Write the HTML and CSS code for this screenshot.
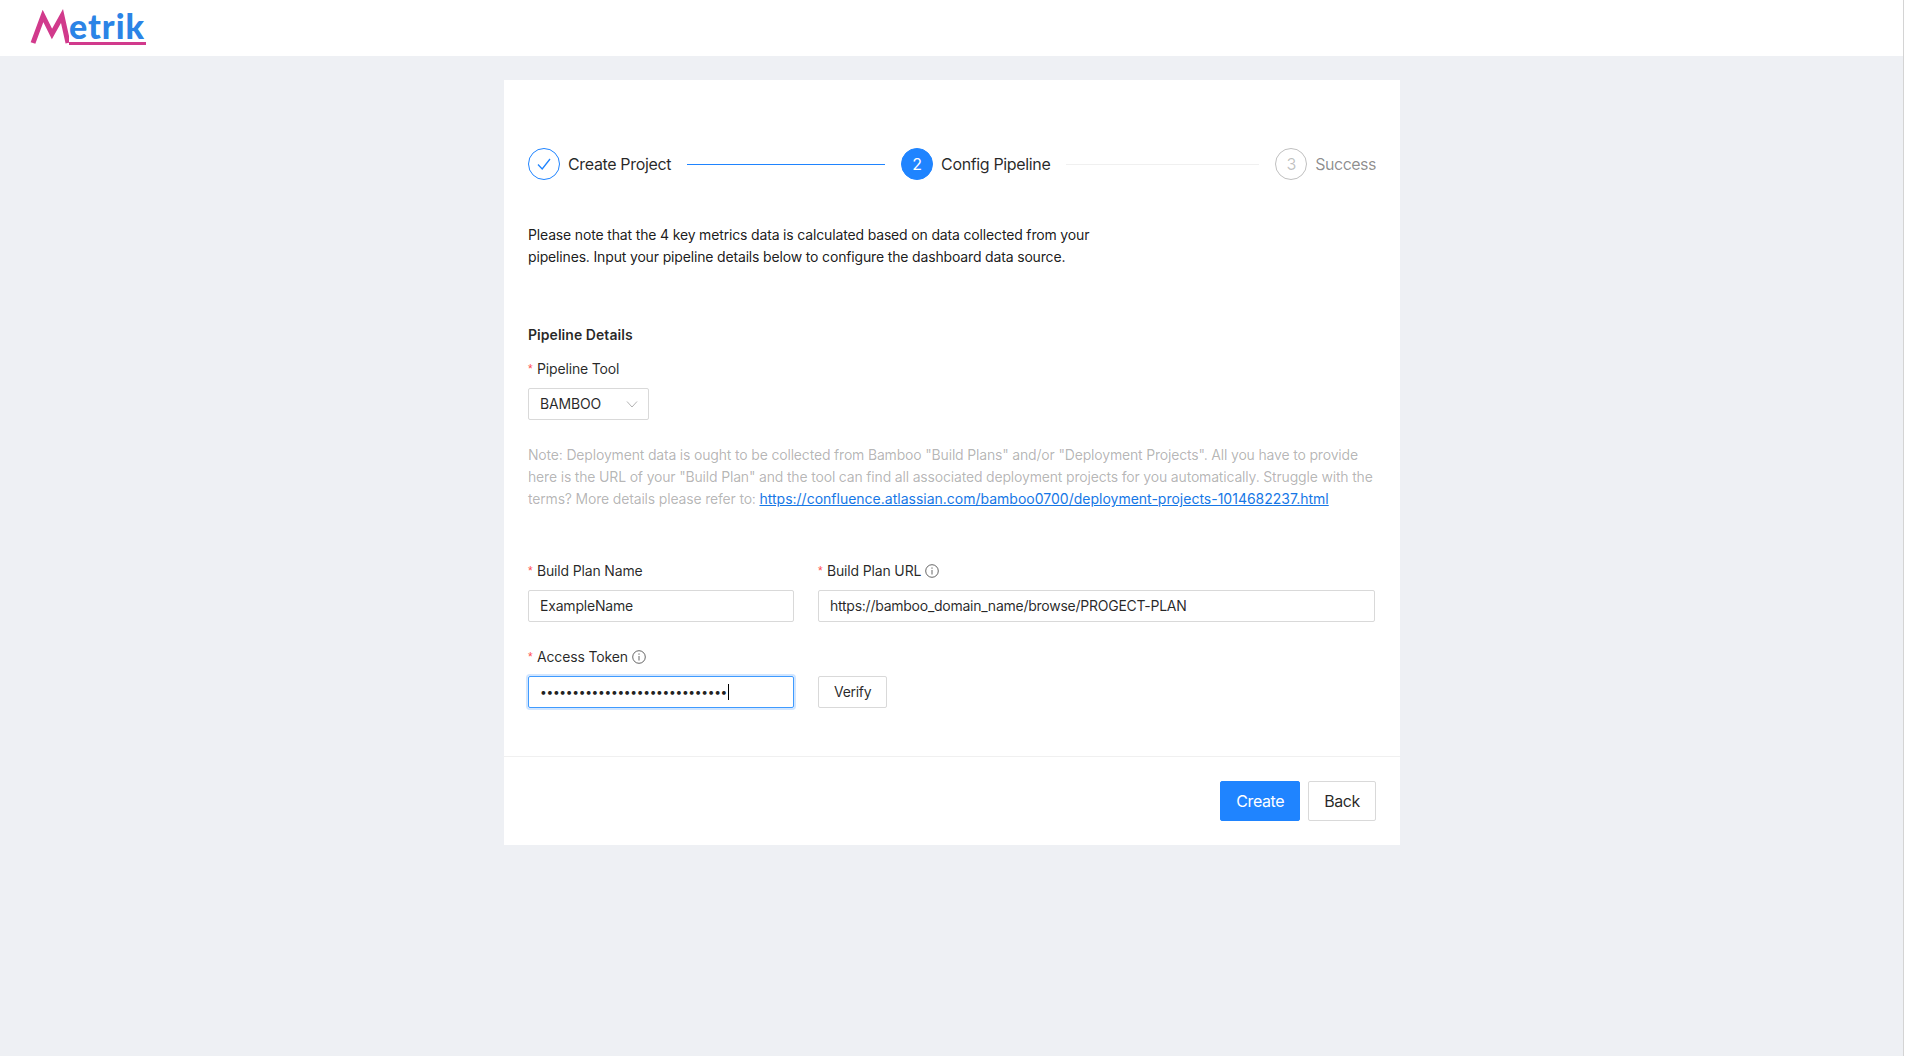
FILE: index.html
```html
<!DOCTYPE html>
<html lang="en">
  <head>
    <meta charset="UTF-8" />
    <meta name="viewport" content="width=device-width, initial-scale=1.0" />
    <title>Metrik</title>
    <link rel="stylesheet" href="styles.css">
  </head>
  <body>
    <header class="header">
      <div class="logo">
        <svg class="logo-mark" width="39" height="38" viewBox="0 0 39 38">
          <path d="M3 35 L13 8 L22 26 L32 8 L38 35" />
        </svg>
        <span class="logo-text">etrik</span>
      </div>
    </header>

    <main class="card">
      <div class="steps">
        <div class="step done">
          <span class="step-icon">
            <svg width="16" height="16" viewBox="0 0 16 16"><path d="M2 8.5 L6.2 13 L14 3" /></svg>
          </span>
          <span class="step-title">Create Project</span>
        </div>
        <div class="step-line active"></div>
        <div class="step current">
          <span class="step-icon">2</span>
          <span class="step-title">Config Pipeline</span>
        </div>
        <div class="step-line"></div>
        <div class="step waiting">
          <span class="step-icon">3</span>
          <span class="step-title">Success</span>
        </div>
      </div>

      <p class="intro">
        Please note that the 4 key metrics data is calculated based on data collected from your
        pipelines. Input your pipeline details below to configure the dashboard data source.
      </p>

      <h3 class="section-title">Pipeline Details</h3>

      <div class="field-label"><span class="required">*</span>Pipeline Tool</div>
      <div class="select">
        <span>BAMBOO</span>
        <svg width="12" height="12" viewBox="0 0 12 12"><path d="M1 3.5 L6 9 L11 3.5" /></svg>
      </div>

      <p class="note">
        Note: Deployment data is ought to be collected from Bamboo "Build Plans" and/or "Deployment Projects". All you have to provide
        here is the URL of your "Build Plan" and the tool can find all associated deployment projects for you automatically. Struggle with the
        terms? More details please refer to:
        <a href="#">https://confluence.atlassian.com/bamboo0700/deployment-projects-1014682237.html</a>
      </p>

      <div class="form-grid">
        <div class="field">
          <div class="field-label"><span class="required">*</span>Build Plan Name</div>
          <input class="input" type="text" value="ExampleName" />
        </div>
        <div class="field">
          <div class="field-label">
            <span class="required">*</span>Build Plan URL
            <svg class="info" width="14" height="14" viewBox="0 0 14 14">
              <circle cx="7" cy="7" r="6.3" />
              <path d="M7 6 V10.5 M7 3.4 V4.8" />
            </svg>
          </div>
          <input class="input url" type="text" value="https://bamboo_domain_name/browse/PROGECT-PLAN" />
        </div>
        <div class="field">
          <div class="field-label">
            <span class="required">*</span>Access Token
            <svg class="info" width="14" height="14" viewBox="0 0 14 14">
              <circle cx="7" cy="7" r="6.3" />
              <path d="M7 6 V10.5 M7 3.4 V4.8" />
            </svg>
          </div>
          <div class="input focused"><span class="dots">•••••••••••••••••••••••••••••</span><span class="caret"></span></div>
        </div>
        <div class="field verify-field">
          <button class="btn btn-small">Verify</button>
        </div>
      </div>

      <div class="footer">
        <button class="btn btn-primary">Create</button>
        <button class="btn">Back</button>
      </div>
    </main>
  </body>
</html>
```

FILE: styles.css
```css
* {
  box-sizing: border-box;
}

html {
  background-color: white;
  padding-right: 1px;
}

body {
  margin: 0;
  min-height: 1056px;
  border-right: 1px solid #d4d4d4;
  background-color: #eef0f4;
  font-family: Inter, 'Noto Sans', sans-serif;
  font-size: 14px;
  line-height: 22px;
  letter-spacing: -0.16px;
  color: rgba(0, 0, 0, 0.85);
}

.header {
  height: 56px;
  background-color: white;
  padding-left: 30px;
}

.logo {
  display: flex;
  align-items: flex-start;
  height: 56px;
}

.logo-mark {
  margin-top: 8px;
  flex: none;
}

.logo-mark path {
  fill: none;
  stroke: #d13a8c;
  stroke-width: 5;
  stroke-linejoin: miter;
}

.logo-text {
  padding-right: 1px;
  height: 37px;
  margin-top: 8px;
  border-bottom: 3px solid #d13a8c;
  font-family: Lato, sans-serif;
  font-weight: 900;
  font-size: 34px;
  line-height: 36px;
  letter-spacing: 1px;
  color: #2b84e6;
}

.card {
  width: 896px;
  height: 765px;
  margin: 24px 0 0 504px;
  padding: 68px 24px 0;
  background-color: white;
  display: flex;
  flex-direction: column;
}

.steps {
  display: flex;
  align-items: center;
  height: 32px;
}

.step {
  display: flex;
  align-items: center;
  gap: 8px;
  flex: none;
}

.step-icon {
  width: 32px;
  height: 32px;
  border-radius: 50%;
  border: 1px solid #1f84ff;
  display: flex;
  align-items: center;
  justify-content: center;
  font-size: 16px;
}

.step-icon svg path {
  fill: none;
  stroke: #1f84ff;
  stroke-width: 1.3;
}

.step-title {
  font-size: 16px;
  line-height: 32px;
  letter-spacing: -0.35px;
}

.current .step-icon {
  background-color: #1f84ff;
  color: white;
}

.waiting .step-icon {
  border-color: rgba(0, 0, 0, 0.25);
  color: rgba(0, 0, 0, 0.25);
}

.waiting .step-title {
  letter-spacing: -0.5px;
  color: rgba(0, 0, 0, 0.45);
}

.step-line {
  flex: 1;
  height: 1px;
  margin: 0 16px;
  background-color: #f0f0f0;
}

.step-line.active {
  flex: none;
  width: 198px;
  background-color: #1f84ff;
}

.intro {
  width: 576px;
  margin: 44px 0 0;
  color: rgba(0, 0, 0, 0.9);
}

.section-title {
  margin: 56px 0 0;
  font-size: 14px;
  line-height: 22px;
  font-weight: 600;
  letter-spacing: 0.05px;
}

.field-label {
  display: flex;
  align-items: center;
  height: 22px;
}

.section-title + .field-label {
  margin-top: 12px;
}

.required {
  width: 9px;
  color: #ff4d4f;
  font-family: 'Liberation Sans', sans-serif;
  font-size: 12px;
}

.info {
  margin-left: 4px;
}

.info circle,
.info path {
  fill: none;
  stroke: rgba(0, 0, 0, 0.6);
  stroke-width: 1;
}

.select {
  width: 121px;
  height: 32px;
  margin-top: 8px;
  padding: 0 10px 0 11px;
  border: 1px solid #d9d9d9;
  border-radius: 2px;
  display: flex;
  align-items: center;
  justify-content: space-between;
}

.select svg path {
  fill: none;
  stroke: rgba(0, 0, 0, 0.3);
  stroke-width: 1;
}

.note {
  margin: 24px 0 0;
  letter-spacing: -0.18px;
  color: rgba(0, 0, 0, 0.3);
}

.note a {
  letter-spacing: 0;
  color: #1677e6;
  text-decoration: underline;
}

.form-grid {
  display: grid;
  grid-template-columns: 266px 557px;
  column-gap: 24px;
  row-gap: 24px;
  margin-top: 50px;
}

.field .input {
  margin-top: 8px;
}

.input {
  display: block;
  width: 100%;
  height: 32px;
  padding: 0 11px 1px;
  border: 1px solid #d9d9d9;
  border-radius: 2px;
  font: inherit;
  letter-spacing: -0.2px;
  color: inherit;
  outline: none;
}

.input.url {
  letter-spacing: -0.25px;
}

.input.focused {
  display: flex;
  align-items: center;
  padding-bottom: 0;
  border-color: #3f9bff;
  box-shadow: 0 0 0 2px rgba(31, 132, 255, 0.2);
}

.dots {
  color: #222;
  font-size: 12px;
  letter-spacing: -0.3px;
}

.caret {
  width: 1px;
  height: 16px;
  margin-left: 1px;
  background-color: black;
}

.verify-field {
  display: flex;
  align-items: flex-end;
}

.btn {
  height: 40px;
  padding: 0 15px;
  border: 1px solid #d9d9d9;
  border-radius: 2px;
  background-color: white;
  font-family: inherit;
  font-size: 16px;
  letter-spacing: -0.4px;
  color: inherit;
  cursor: pointer;
}

.btn-small {
  height: 32px;
  padding-bottom: 1px;
  font-size: 14px;
  letter-spacing: -0.3px;
}

.btn-primary {
  background-color: #1f84ff;
  border-color: #1f84ff;
  color: white;
}

.footer {
  display: flex;
  justify-content: flex-end;
  gap: 8px;
  margin: 48px -24px 0;
  padding: 24px 24px;
  border-top: 1px solid #f0f0f0;
}
```
